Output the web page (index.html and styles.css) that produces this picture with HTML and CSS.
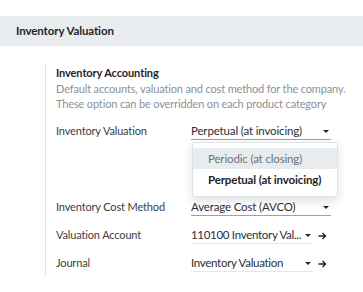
FILE: index.html
```html
<!DOCTYPE html>
<html lang="en">
<head>
    <meta charset="UTF-8">
    <title>Inventory Valuation</title>
    <link rel="stylesheet" href="styles.css">
</head>
<body>
    <div class="section-title">Inventory Valuation</div>

    <div class="setting">
        <div class="setting-title">Inventory Accounting</div>
        <div class="setting-help">
            Default accounts, valuation and cost method for the company.<br>
            These option can be overridden on each product category
        </div>

        <div class="field-row first">
            <span class="field-label">Inventory Valuation</span>
            <div class="field-value">
                <div class="select">
                    <span class="select-text">Perpetual (at invoicing)</span>
                    <span class="caret"></span>
                </div>
                <ul class="dropdown">
                    <li class="active">Periodic (at closing)</li>
                    <li class="selected">Perpetual (at invoicing)</li>
                </ul>
            </div>
        </div>

        <div class="field-row">
            <span class="field-label">Inventory Cost Method</span>
            <div class="field-value">
                <div class="select">
                    <span class="select-text">Average Cost (AVCO)</span>
                    <span class="caret"></span>
                </div>
            </div>
        </div>

        <div class="field-row">
            <span class="field-label">Valuation Account</span>
            <div class="field-value">
                <div class="select many2one">
                    <span class="select-text">110100 Inventory Val...</span>
                    <span class="caret"></span>
                </div>
                <svg class="link-arrow" width="9" height="8" viewBox="0 0 9 8">
                    <path d="M0.5 4H7.5M4.5 1L7.5 4L4.5 7" fill="none" stroke="#212529" stroke-width="1.4"/>
                </svg>
            </div>
        </div>

        <div class="field-row">
            <span class="field-label">Journal</span>
            <div class="field-value">
                <div class="select many2one">
                    <span class="select-text">Inventory Valuation</span>
                    <span class="caret"></span>
                </div>
                <svg class="link-arrow" width="9" height="8" viewBox="0 0 9 8">
                    <path d="M0.5 4H7.5M4.5 1L7.5 4L4.5 7" fill="none" stroke="#212529" stroke-width="1.4"/>
                </svg>
            </div>
        </div>
    </div>
</body>
</html>
```

FILE: styles.css
```css
body {
    margin: 0;
    padding: 0;
    background: #ffffff;
    font-family: 'Lato', 'Open Sans', sans-serif;
    font-size: 11px;
    letter-spacing: -0.15px;
    color: #212529;
}

.section-title {
    margin-top: 16px;
    height: 30px;
    line-height: 30px;
    padding-left: 16px;
    background-color: #e9ecef;
    font-weight: 700;
    font-size: 11.5px;
    letter-spacing: -0.1px;
    color: #1f2327;
}

.setting {
    margin: 17px 0 0 45px;
    padding: 2px 0 4px 10px;
    border-left: 1px solid #e2e5e8;
}

.setting-title {
    font-weight: 700;
    line-height: 16px;
    letter-spacing: -0.1px;
    color: #1f2327;
}

.setting-help {
    line-height: 15px;
    color: #8c9196;
}

.field-row {
    display: flex;
    align-items: flex-start;
    margin-top: 12px;
}

.field-row + .field-row {
    margin-top: 11px;
}

.field-row.first {
    margin-bottom: 59px;
}

.field-label {
    width: 135px;
    flex-shrink: 0;
    line-height: 16px;
    color: #3b4046;
}

.field-value {
    position: relative;
    display: flex;
    align-items: center;
}

.select {
    width: 140px;
    display: flex;
    justify-content: space-between;
    align-items: center;
    gap: 4px;
    line-height: 16px;
    font-size: 11.5px;
    border-bottom: 1px solid #9aa0a6;
    color: #2b3035;
}

.select-text {
    white-space: nowrap;
}

.select.many2one {
    width: 122px;
    border-bottom-color: #e4e6e9;
}

.many2one .select-text {
    letter-spacing: -0.3px;
}

.caret {
    flex-shrink: 0;
    width: 0;
    height: 0;
    margin-right: 2px;
    border-left: 3px solid transparent;
    border-right: 3px solid transparent;
    border-top: 3px solid #212529;
}

.link-arrow {
    margin-left: 5px;
}

.dropdown {
    position: absolute;
    top: 19px;
    left: 1px;
    width: 144px;
    margin: 0;
    padding: 5px 0;
    list-style: none;
    font-size: 11.5px;
    background: #ffffff;
    border: 1px solid #dfe2e5;
    border-radius: 3px;
    box-shadow: 0 4px 10px rgba(0, 0, 0, 0.12);
    z-index: 2;
}

.dropdown li {
    padding: 0 15px;
    height: 21px;
    line-height: 21px;
    white-space: nowrap;
}

.dropdown li.active {
    background-color: #e9ecef;
    color: #6c7278;
}

.dropdown li.selected {
    height: 22px;
    line-height: 22px;
    font-weight: 700;
    color: #1f2327;
}
```
